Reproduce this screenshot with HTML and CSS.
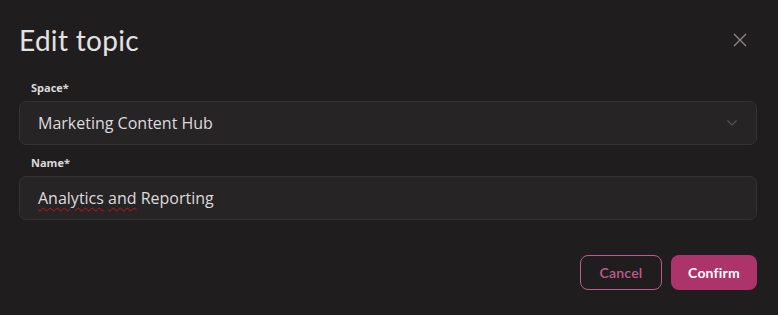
FILE: index.html
```html
<!DOCTYPE html>
<html>
<head>
<meta charset="utf-8">
<link rel="stylesheet" href="styles.css">
</head>
<body>
<div class="dialog">
  <div class="header">
    <h1 class="title">Edit topic</h1>
    <button class="close" aria-label="Close">
      <svg width="14" height="14" viewBox="0 0 14 14"><path d="M1 1L13 13M13 1L1 13" stroke="#8a8687" stroke-width="1.4" fill="none"/></svg>
    </button>
  </div>
  <div class="field first">
    <label class="label">Space*</label>
    <div class="box select">
      <span class="value">Marketing Content Hub</span>
      <svg class="chev" width="10" height="6" viewBox="0 0 10 6"><path d="M0.5 0.5L5 5L9.5 0.5" stroke="#5a5657" stroke-width="1.1" fill="none"/></svg>
    </div>
  </div>
  <div class="field">
    <label class="label">Name*</label>
    <div class="box">
      <span class="value"><span class="spell">Analytics</span> <span class="spell">and</span> Reporting</span>
    </div>
  </div>
  <div class="actions">
    <button class="btn cancel">Cancel</button>
    <button class="btn confirm">Confirm</button>
  </div>
</div>
</body>
</html>
```

FILE: styles.css
```css
html, body {
  margin: 0;
  padding: 0;
  background: #201d1e;
  height: 100%;
}
.dialog {
  padding: 22px 21px 0 19px;
  font-family: "Open Sans", "Noto Sans", sans-serif;
}
.header {
  display: flex;
  justify-content: space-between;
  align-items: center;
  height: 36px;
}
.title {
  margin: 0;
  font-family: "Lato", "Open Sans", sans-serif;
  font-weight: 400;
  font-size: 28px;
  color: #e4e1e2;
  letter-spacing: 0.3px;
}
.close {
  background: none;
  border: none;
  padding: 0;
  margin-right: 10px;
  width: 14px;
  height: 14px;
  display: flex;
}
.field {
  display: flex;
  flex-direction: column;
}
.field.first { margin-top: 22px; }
.label {
  font-family: "Open Sans", sans-serif;
  font-weight: 700;
  font-size: 11px;
  color: #dcd9da;
  padding-left: 12px;
  height: 16px;
  line-height: 16px;
  margin-bottom: 5px;
}
.field + .field { margin-top: 10px; }
.box {
  height: 42px;
  border: 1px solid #353233;
  border-radius: 7px;
  background: #272425;
  display: flex;
  align-items: center;
  padding: 0 19px 0 18px;
}
.value {
  font-size: 16px;
  color: #dedbdc;
  flex: 1;
}
.spell {
  text-decoration: underline wavy #d01010;
  text-decoration-thickness: 1px;
  text-underline-offset: 3px;
}
.actions {
  display: flex;
  justify-content: flex-end;
  gap: 9px;
  margin-top: 35px;
}
.btn {
  font-family: "Lato", sans-serif;
  font-size: 14px;
  height: 35px;
  border-radius: 8px;
  cursor: pointer;
  letter-spacing: 0.2px;
}
.cancel {
  width: 82px;
  background: transparent;
  border: 1px solid #c05b8c;
  color: #c05b8c;
  font-weight: 600;
}
.confirm {
  width: 86px;
  background: #ad336b;
  border: none;
  color: #fff;
  font-weight: 700;
}
```
